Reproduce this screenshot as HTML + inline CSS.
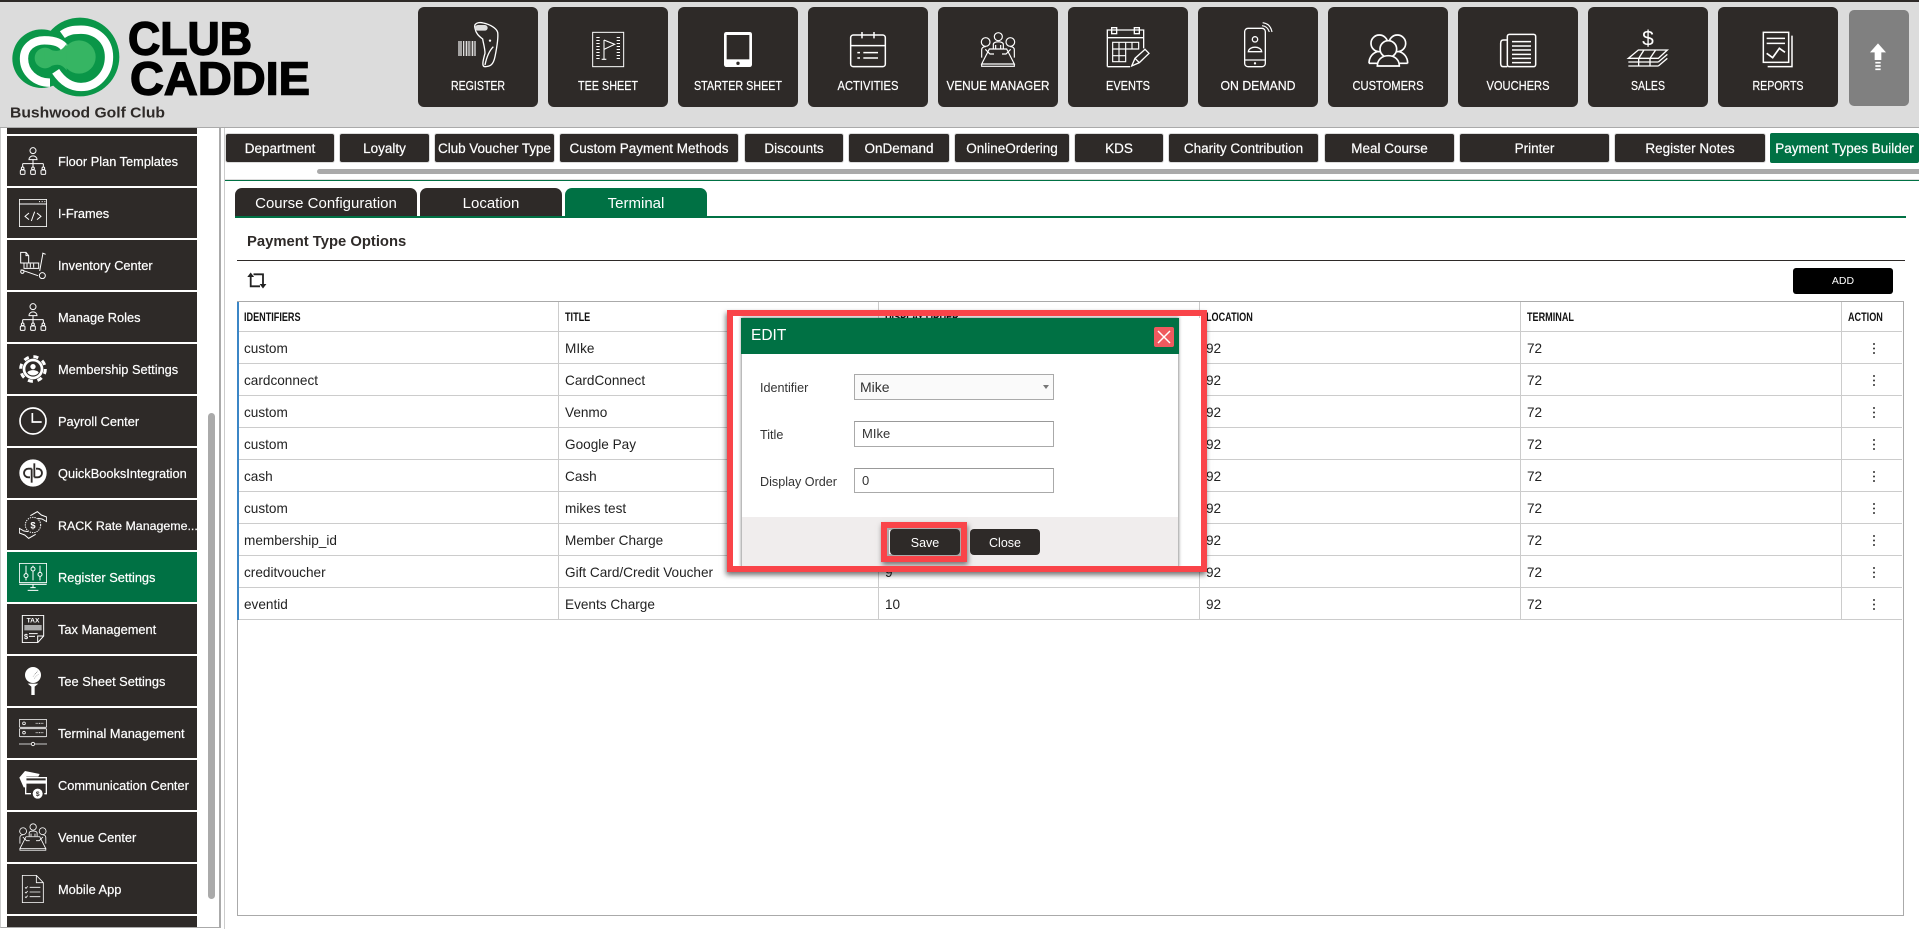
<!DOCTYPE html>
<html lang="en"><head><meta charset="utf-8"><title>Club Caddie - Payment Types Builder</title>
<style>
html,body{margin:0;padding:0;width:1919px;height:929px;overflow:hidden;background:#fff;font-family:"Liberation Sans",Arial,sans-serif;color:#222}
*{box-sizing:border-box}
.a{position:absolute}
#hd{left:0;top:0;width:1919px;height:128px;background:#dcdcdc;border-top:2px solid #2e2a28;border-bottom:1px solid #aaa}
.nb{position:absolute;top:7px;width:120px;height:100px;background:#2e2a28;border-radius:6px}
.si{position:absolute;left:7px;width:190px;height:50px;background:#2e2a28;color:#fff;font-size:12.8px;line-height:52px;padding-left:51px;white-space:nowrap;overflow:hidden;-webkit-text-stroke:.2px #fff}
.si svg{position:absolute;left:12px;top:11px;width:28px;height:28px;overflow:visible}
.si.on{background:#007144}
.tb{position:absolute;top:134px;height:28px;background:#2e2a28;color:#fff;font-size:13.5px;line-height:30px;text-align:center;border-radius:2px;box-shadow:0 0 0 1px #dcdcdc;white-space:nowrap;-webkit-text-stroke:.2px #fff}
.it{position:absolute;top:188px;height:28px;background:#2e2a28;color:#fff;font-size:15px;line-height:31px;text-align:center;border-radius:7px 7px 0 0}
#tw{left:237px;top:301px;width:1667px;height:615px;border:1px solid #aaa}
table{border-collapse:separate;border-spacing:0;table-layout:fixed;width:1664px;font-size:13.6px;color:#222}
td,th{height:32px;padding:2px 0 0 6px;border-bottom:1px solid #ccc;border-right:1px solid #ccc;text-align:left;font-weight:400;white-space:nowrap;overflow:hidden}
th{height:30px;font-size:11.5px;font-weight:700;color:#111}
th span{display:inline-block;transform:scaleX(.79);transform-origin:left center}
td:last-child,th:last-child{border-right:0}
i.d{display:block;width:2px;height:2px;margin:-6px 0 0 25px;background:#333;border-radius:50%;box-shadow:0 4.5px #333,0 9px #333}
.lb{position:absolute;left:760px;font-size:12.6px;color:#333;line-height:16px}
.fld{position:absolute;left:854px;width:200px;border:1px solid #aaa;border-top-color:#999;background:#fff;font-size:13px;color:#333;padding-left:7px}
.bt{position:absolute;top:529px;width:70px;height:26px;background:#2e2a28;color:#fff;font-size:12.5px;line-height:29px;text-align:center;border-radius:4px}
</style></head><body>

<svg width="0" height="0" style="position:absolute">
<defs>
<symbol id="org" viewBox="0 0 84 84"><g fill="none" stroke="#fff" stroke-width="3"><circle cx="42" cy="11" r="9"/><path d="M30 38c0-15 24-15 24 0z"/><path d="M42 38v12M11 50h62M11 50v10M42 50v10M73 50v10"/><circle cx="11" cy="64" r="4"/><rect x="4" y="69" width="14" height="13" rx="3"/><circle cx="42" cy="64" r="4"/><rect x="35" y="69" width="14" height="13" rx="3"/><circle cx="73" cy="64" r="4"/><rect x="66" y="69" width="14" height="13" rx="3"/></g></symbol>
<symbol id="ifr" viewBox="0 0 84 84"><g fill="none" stroke="#fff" stroke-width="3"><rect x="1" y="1" width="82" height="82"/><path d="M1 15h82M60 8h3M68 8h3M76 8h3"/><path d="M30 42L18 52l12 10M54 42l12 10-12 10M47 38l-10 28"/></g></symbol>
<symbol id="inv" viewBox="0 0 84 84"><g fill="none" stroke="#fff" stroke-width="3"><path d="M5 4h16l8 10v22H5zM21 4v10h8"/><path d="M15 36h44v16H15zM24 38v12M34 38v12M44 38v12"/><path d="M70 6l10 4M72 6l-10 54M5 56l52 18"/><circle cx="70" cy="74" r="9"/><circle cx="10" cy="62" r="5"/></g></symbol>
<symbol id="mem" viewBox="0 0 84 84"><circle cx="42" cy="42" r="37" fill="none" stroke="#fff" stroke-width="9" stroke-dasharray="15 14.07"/><circle cx="42" cy="42" r="31" fill="#fff"/><circle cx="42" cy="42" r="23" fill="#2e2a28"/><circle cx="42" cy="35" r="8" fill="#fff"/><path d="M25 52c6-9 28-9 34 0-6 12-28 12-34 0z" fill="#fff"/></symbol>
<symbol id="pay" viewBox="0 0 84 84"><g fill="none" stroke="#fff" stroke-width="5"><circle cx="42" cy="42" r="39"/><path d="M40 18v27h28"/></g></symbol>
<symbol id="qb" viewBox="0 0 84 84"><circle cx="42" cy="42" r="41" fill="#fff"/><g fill="none" stroke="#2e2a28" stroke-width="5.5"><path d="M38 29H28a13 13 0 0 0 0 26h5"/><path d="M38 29v42"/><path d="M46 55h10a13 13 0 0 0 0-26h-5"/><path d="M46 13v42"/></g></symbol>
<symbol id="rack" viewBox="0 0 84 84"><circle cx="42" cy="42" r="23" fill="none" stroke="#fff" stroke-width="3" stroke-dasharray="4 3"/><text x="42" y="52" text-anchor="middle" font-family="Liberation Sans" font-weight="700" font-size="28" fill="#fff">$</text><g fill="none" stroke="#fff" stroke-width="3"><path d="M34 14L55 2l12 10 16 6v14l-14-8-12-2"/><path d="M50 70L29 82 17 72 1 66V52l14 8 12 2"/></g></symbol>
<symbol id="reg" viewBox="0 0 84 84"><g fill="none" stroke="#fff" stroke-width="3"><rect x="1" y="1" width="82" height="58"/><path d="M21 8v24M21 44v8M42 8v4M42 24v28M63 8v20M63 40v12"/><circle cx="21" cy="38" r="6"/><circle cx="42" cy="18" r="6"/><circle cx="63" cy="34" r="6"/><path d="M1 64h82M42 64v10M26 82h32M34 74h16"/></g></symbol>
<symbol id="tax" viewBox="0 0 84 84"><g fill="none" stroke="#fff" stroke-width="3"><path d="M10 1h64v62L56 83H10zM56 83V63h18"/></g><text x="42" y="22" text-anchor="middle" font-family="Liberation Sans" font-weight="700" font-size="20" fill="#fff">TAX</text><path d="M16 30h52v16H16z" fill="#aaa"/><text x="15" y="72" font-family="Liberation Sans" font-weight="700" font-size="22" fill="#fff">$</text><path d="M30 56h26M30 64h18" stroke="#fff" stroke-width="3"/></symbol>
<symbol id="tee" viewBox="0 0 84 84"><circle cx="42" cy="24" r="24" fill="#fff"/><path d="M26 50h32l-11 9v25h-10V59z" fill="#fff"/><path d="M48 20l10-10M42 28l14-14M46 34l12-12" stroke="#888" stroke-width="2" stroke-dasharray="2 3"/></symbol>
<symbol id="term" viewBox="0 0 84 84"><g fill="none" stroke="#fff" stroke-width="2.5"><rect x="1" y="1" width="82" height="24" rx="3"/><rect x="1" y="29" width="82" height="24" rx="3"/><circle cx="15" cy="13" r="4"/><circle cx="15" cy="41" r="4"/><path d="M50 13h24M50 41h24" stroke-dasharray="3 2"/><path d="M0 75h36M48 75h36"/><circle cx="42" cy="75" r="5"/></g></symbol>
<symbol id="com" viewBox="0 0 84 84"><path d="M1 20L18 0l44 9-4 8H22v32h-8z" fill="#fff"/><g fill="none" stroke="#fff" stroke-width="4"><path d="M36 68H20V20h62v48h-6"/></g><path d="M20 28h62v10H20z" fill="#fff"/><circle cx="56" cy="68" r="15" fill="#fff"/><text x="56" y="75" text-anchor="middle" font-family="Liberation Sans" font-weight="700" font-size="20" fill="#2e2a28">$</text></symbol>
<symbol id="ven" viewBox="93 50 103 106"><g fill="none" stroke="#fff" stroke-width="3.2"><circle cx="107" cy="81" r="13"/><circle cx="145" cy="65" r="12"/><circle cx="181" cy="81" r="13"/><path d="M130 100v-12c0-10 30-10 30 0v12M137 90v10M152 90v10"/><path d="M95 128V105c0-7 5-10 12-10M193 128V105c0-7-5-10-12-10"/><path d="M106 103l14 14h12M182 103l-14 14h-12"/><path d="M118 102h52l23 45H95zM95 147v6h98v-6"/></g></symbol>
<symbol id="mob" viewBox="0 0 84 84"><g fill="none" stroke="#fff" stroke-width="2.5"><path d="M10 1h42l21 22v60H10zM52 1v22h21"/><path d="M18 37l3 3 5-6M18 51l3 3 5-6M18 65l3 3 5-6M32 37h32M32 51h32M32 65h32"/></g></symbol>
</defs></svg>

<div id="hd" class="a"></div>
<!-- nav buttons -->
<div class="nb" style="left:418px"></div><div class="nb" style="left:548px"></div><div class="nb" style="left:678px"></div><div class="nb" style="left:808px"></div><div class="nb" style="left:938px"></div><div class="nb" style="left:1068px"></div><div class="nb" style="left:1198px"></div><div class="nb" style="left:1328px"></div><div class="nb" style="left:1458px"></div><div class="nb" style="left:1588px"></div><div class="nb" style="left:1718px"></div>
<div class="a" style="left:1849px;top:10px;width:60px;height:96px;background:#808080;border-radius:5px"></div>

<svg class="a" style="left:0;top:0" width="1919" height="128" viewBox="0 0 1919 128">
<!-- logo -->
<g transform="translate(5,12) scale(.33333)">
<circle cx="110" cy="140" r="88" fill="#0a9648"/><circle cx="225" cy="135" r="118" fill="#0a9648"/>
<g fill="none" stroke="#fff" stroke-width="25"><path d="M135 212C90 212 57 180 57 140 57 105 85 85 118 85 145 85 170 92 180 110"/><path d="M152 178C170 205 195 225 228 225 275 225 312 185 312 135 312 85 275 53 228 53 205 53 190 55 172 68"/></g>
<circle cx="120" cy="138" r="31" fill="#36b563"/><circle cx="222" cy="135" r="50" fill="#36b563"/><path d="M120 108C150 118 165 125 185 95V175C165 150 150 158 120 168Z" fill="#36b563"/>
</g>
<text x="128" y="54.7" font-family="Liberation Sans" font-weight="700" font-size="46" fill="#000" stroke="#000" stroke-width="1.4" textLength="124" lengthAdjust="spacingAndGlyphs">CLUB</text>
<text x="130" y="94.3" font-family="Liberation Sans" font-weight="700" font-size="46" fill="#000" stroke="#000" stroke-width="1.4" textLength="180" lengthAdjust="spacingAndGlyphs">CADDIE</text>
<text x="10" y="117.5" font-family="Liberation Sans" font-weight="700" font-size="15" fill="#2e2a28" textLength="155" lengthAdjust="spacingAndGlyphs">Bushwood Golf Club</text>

<!-- zoom10 icons -->
<g transform="translate(440,15) scale(.33333)" fill="none" stroke="#fff" stroke-width="4">
<path d="M105 40C100 25 115 20 130 24 150 28 170 40 173 52 176 70 170 100 165 125 160 150 150 155 135 155 125 155 128 140 135 115 135 100 130 85 128 72 115 62 108 55 105 40Z"/>
<rect x="105" y="30" width="38" height="17" rx="8.5" fill="#ddd" stroke="none"/>
<circle cx="150" cy="77" r="3.5" fill="#fff" stroke="none"/><path d="M160 95C150 105 140 125 135 150"/>
<path d="M54 100.5H108" stroke-width="45" stroke-dasharray="2 2 4 2 2 3 3 2 1 2 5 2 2 2 3 2 1 2 4 2" opacity=".85"/>
<rect x="458" y="52" width="93" height="103" stroke-width="3"/>
<path d="M474 66V137M535 66V137" stroke-width="10" stroke-dasharray="3 6"/>
<path d="M492 75V133M485 133H499M492 75L524 88 492 103" stroke-width="3.2"/>
<rect x="852" y="51" width="84" height="105" rx="7" fill="#fff" stroke="none"/><rect x="860" y="60" width="68" height="73" fill="#2e2a28" stroke="none"/><circle cx="894" cy="145" r="5" fill="#2e2a28" stroke="none"/>
<rect x="1232" y="60" width="104" height="95" rx="8" stroke-width="4.5"/><path d="M1232 92H1336M1266 51V70M1302 51V70M1270 113H1314M1270 129H1314" stroke-width="4.5"/><path d="M1252 113h8M1252 129h8" stroke-width="4.5"/>
</g>
<!-- zoom11 icons -->
<g transform="translate(950,15) scale(.33333)" fill="none" stroke="#fff" stroke-width="3.5">
<circle cx="107" cy="81" r="13"/><circle cx="145" cy="65" r="12"/><circle cx="181" cy="81" r="13"/>
<path d="M130 100V88C130 78 160 78 160 88V100M137 90V100M152 90V100M95 128V105C95 98 100 95 107 95M193 128V105C193 98 188 95 181 95M106 103L120 117H132M182 103L168 117H156M118 102H170L193 147H95ZM95 147V154H193V147"/>
<path d="M472 155V45H581V100M472 155H540M472 68H581" stroke-width="4"/>
<rect x="485" y="38" width="15" height="18" stroke-width="4"/><rect x="553" y="38" width="15" height="18" stroke-width="4"/>
<path d="M488 82H566V102H488ZM488 122H527V82M488 102V140H527V102M507 82V140M546 82V102" stroke-width="3.5"/>
<path d="M545 153L555 130 585 103 597 115 568 143ZM555 130L568 143" stroke-width="4"/>
<rect x="884" y="40" width="62" height="115" rx="10" stroke-width="4"/><path d="M884 135H946" stroke-width="4"/><circle cx="915" cy="145" r="3.5" fill="#fff" stroke="none"/>
<circle cx="915" cy="73" r="8" stroke-width="4"/><path d="M895 110C897 92 933 92 935 110Z" stroke-width="4"/>
<path d="M936 32C948 33 955 41 958 51M938 23C955 25 963 35 966 51" stroke-width="3.5"/>
<g stroke-width="5"><circle cx="1288" cy="85" r="25"/><circle cx="1342" cy="85" r="25"/><path d="M1257 145C1257 125 1270 113 1282 110M1373 145C1373 125 1360 113 1348 110M1257 145H1282M1373 145H1348"/>
<circle cx="1315" cy="102" r="25" fill="#2e2a28"/><path d="M1282 153C1282 135 1295 122 1315 122 1335 122 1348 135 1348 153Z" fill="#2e2a28"/></g>
</g>
<!-- zoom12 icons -->
<g transform="translate(1450,15) scale(.33333)" fill="none" stroke="#fff" stroke-width="4.5">
<rect x="172" y="58" width="85" height="97" rx="6"/><path d="M172 75H160Q152 75 152 85V145Q152 155 160 155H172"/>
<path d="M186 80H243M186 93H243M186 105H243M186 118H243M186 130H243M186 143H243"/>
<path d="M535 130L565 105H652L625 130ZM535 130H625M535 141H625M535 153H625M625 130L652 105M625 141L652 118M625 153L652 130M566 130V153M600 130V153M582 105L566 130M617 105L600 130" stroke-width="4"/>
<rect x="940" y="52" width="76" height="90"/><path d="M1026 62V155H953"/><path d="M950 70H1005M950 85H1005"/><path d="M950 115L968 128 988 100 1005 112" stroke-width="5"/>
<path d="M1284 85L1308 112H1294V135H1274V112H1260Z" fill="#fff" stroke="none"/><path d="M1276 143H1292M1276 153H1292M1276 163H1292" stroke-width="5"/>
</g>
<text x="1648" y="45.5" text-anchor="middle" font-family="Liberation Sans" font-size="21" fill="#fff">$</text>
<!-- labels -->
<g font-family="Liberation Sans" font-size="12.5" fill="#fff" stroke="#fff" stroke-width=".2" text-anchor="middle">
<text x="478" y="90" textLength="54" lengthAdjust="spacingAndGlyphs">REGISTER</text>
<text x="608" y="90" textLength="60" lengthAdjust="spacingAndGlyphs">TEE SHEET</text>
<text x="738" y="90" textLength="88" lengthAdjust="spacingAndGlyphs">STARTER SHEET</text>
<text x="868" y="90" textLength="61" lengthAdjust="spacingAndGlyphs">ACTIVITIES</text>
<text x="998" y="90" textLength="103" lengthAdjust="spacingAndGlyphs">VENUE MANAGER</text>
<text x="1128" y="90" textLength="44" lengthAdjust="spacingAndGlyphs">EVENTS</text>
<text x="1258" y="90" textLength="75" lengthAdjust="spacingAndGlyphs">ON DEMAND</text>
<text x="1388" y="90" textLength="71" lengthAdjust="spacingAndGlyphs">CUSTOMERS</text>
<text x="1518" y="90" textLength="63" lengthAdjust="spacingAndGlyphs">VOUCHERS</text>
<text x="1648" y="90" textLength="34" lengthAdjust="spacingAndGlyphs">SALES</text>
<text x="1778" y="90" textLength="51" lengthAdjust="spacingAndGlyphs">REPORTS</text>
</g>
</svg>

<!-- sidebar -->
<div class="a" style="left:0;top:128px;width:221px;height:800px;border-left:1px solid #ccc;border-right:2px solid #aaa;border-bottom:1px solid #aaa;overflow:hidden">
</div>
<div class="a" style="left:224px;top:128px;width:1px;height:801px;background:#ccc"></div>
<div class="si" style="top:128px;height:6px"></div>
<div class="si" style="top:136px"><svg><use href="#org"/></svg>Floor Plan Templates</div>
<div class="si" style="top:188px"><svg><use href="#ifr"/></svg>I-Frames</div>
<div class="si" style="top:240px"><svg><use href="#inv"/></svg>Inventory Center</div>
<div class="si" style="top:292px"><svg><use href="#org"/></svg>Manage Roles</div>
<div class="si" style="top:344px"><svg><use href="#mem"/></svg>Membership Settings</div>
<div class="si" style="top:396px"><svg><use href="#pay"/></svg>Payroll Center</div>
<div class="si" style="top:448px"><svg><use href="#qb"/></svg>QuickBooksIntegration</div>
<div class="si" style="top:500px;font-size:12.4px"><svg><use href="#rack"/></svg>RACK Rate Manageme...</div>
<div class="si on" style="top:552px"><svg><use href="#reg"/></svg>Register Settings</div>
<div class="si" style="top:604px"><svg><use href="#tax"/></svg>Tax Management</div>
<div class="si" style="top:656px"><svg><use href="#tee"/></svg>Tee Sheet Settings</div>
<div class="si" style="top:708px"><svg><use href="#term"/></svg>Terminal Management</div>
<div class="si" style="top:760px"><svg><use href="#com"/></svg>Communication Center</div>
<div class="si" style="top:812px"><svg><use href="#ven"/></svg>Venue Center</div>
<div class="si" style="top:864px"><svg><use href="#mob"/></svg>Mobile App</div>
<div class="si" style="top:916px;height:11px"></div>
<div class="a" style="left:208px;top:413px;width:7px;height:486px;background:#aaa;border-radius:4px"></div>

<!-- settings tabs -->
<div class="tb" style="left:226px;width:108px">Department</div>
<div class="tb" style="left:340px;width:89px">Loyalty</div>
<div class="tb" style="left:435px;width:119px;letter-spacing:-.05px">Club Voucher Type</div>
<div class="tb" style="left:560px;width:178px">Custom Payment Methods</div>
<div class="tb" style="left:745px;width:98px">Discounts</div>
<div class="tb" style="left:849px;width:100px">OnDemand</div>
<div class="tb" style="left:955px;width:114px">OnlineOrdering</div>
<div class="tb" style="left:1075px;width:88px">KDS</div>
<div class="tb" style="left:1169px;width:149px">Charity Contribution</div>
<div class="tb" style="left:1325px;width:129px">Meal Course</div>
<div class="tb" style="left:1460px;width:149px">Printer</div>
<div class="tb" style="left:1615px;width:150px">Register Notes</div>
<div class="tb" style="left:1770px;width:149px;top:133px;height:30px;line-height:32px;background:#007144;box-shadow:none">Payment Types Builder</div>
<div class="a" style="left:317px;top:169px;width:1602px;height:5px;background:#aaa;border-radius:3px 0 0 3px"></div>
<div class="a" style="left:225px;top:179px;width:1694px;height:2px;background:#dcdcdc"></div>
<div class="a" style="left:225px;top:180px;width:1694px;height:1px;background:#007144"></div>

<!-- inner tabs -->
<div class="it" style="left:235px;width:182px">Course Configuration</div>
<div class="it" style="left:420px;width:142px">Location</div>
<div class="it" style="left:565px;width:142px;background:#007144">Terminal</div>
<div class="a" style="left:235px;top:216px;width:1671px;height:2px;background:#007144"></div>

<div class="a" style="left:247px;top:233px;font-size:14.8px;font-weight:700;line-height:18px;color:#2e2a28">Payment Type Options</div>
<div class="a" style="left:237px;top:260px;width:1668px;height:1px;background:#2e2a28"></div>
<svg class="a" style="left:246px;top:271px" width="22" height="20" viewBox="246 272 22 20"><g fill="none" stroke="#222" stroke-width="1.8"><path d="M250.7 277V287.3H260"/><path d="M263 286V275.3H253.5"/></g><path d="M250.7 273.5l3.4 4.5h-6.8zM263 289.5l3.4-4.5h-6.8z" fill="#222"/></svg>
<div class="a" style="left:1793px;top:268px;width:100px;height:26px;background:#000;color:#fff;border-radius:3px;font-size:10.5px;line-height:26px;text-align:center">ADD</div>

<!-- table -->
<div id="tw" class="a">
<table>
<colgroup><col style="width:321px"><col style="width:320px"><col style="width:321px"><col style="width:321px"><col style="width:321px"><col style="width:60px"></colgroup>
<tr><th><span>IDENTIFIERS</span></th><th><span>TITLE</span></th><th><span>DISPLAY ORDER</span></th><th><span>LOCATION</span></th><th><span>TERMINAL</span></th><th><span>ACTION</span></th></tr>
<tr><td>custom</td><td>MIke</td><td>1</td><td>92</td><td>72</td><td><i class="d"></i></td></tr>
<tr><td>cardconnect</td><td>CardConnect</td><td>2</td><td>92</td><td>72</td><td><i class="d"></i></td></tr>
<tr><td>custom</td><td>Venmo</td><td>3</td><td>92</td><td>72</td><td><i class="d"></i></td></tr>
<tr><td>custom</td><td>Google Pay</td><td>4</td><td>92</td><td>72</td><td><i class="d"></i></td></tr>
<tr><td>cash</td><td>Cash</td><td>5</td><td>92</td><td>72</td><td><i class="d"></i></td></tr>
<tr><td>custom</td><td>mikes test</td><td>6</td><td>92</td><td>72</td><td><i class="d"></i></td></tr>
<tr><td>membership_id</td><td>Member Charge</td><td>8</td><td>92</td><td>72</td><td><i class="d"></i></td></tr>
<tr><td>creditvoucher</td><td>Gift Card/Credit Voucher</td><td>9</td><td>92</td><td>72</td><td><i class="d"></i></td></tr>
<tr><td>eventid</td><td>Events Charge</td><td>10</td><td>92</td><td>72</td><td><i class="d"></i></td></tr>
</table>
</div>
<div class="a" style="left:237px;top:302px;width:2px;height:318px;background:#3b86c6"></div>

<!-- modal -->
<div class="a" style="left:733px;top:318px;width:8px;height:248px;background:#fff"></div>
<div class="a" style="left:1179px;top:318px;width:22px;height:248px;background:#fff"></div>
<div class="a" style="left:741px;top:318px;width:438px;height:250px;background:#fff;border-left:1px solid #bbb;border-right:1px solid #bbb;box-shadow:0 -1px 3px rgba(0,0,0,.4)"></div>
<div class="a" style="left:741px;top:318px;width:438px;height:36px;background:#007144"></div>
<div class="a" style="left:751px;top:327px;color:#fff;font-size:15.5px;line-height:18px">EDIT</div>
<div class="a" style="left:1154px;top:327px;width:20px;height:20px;background:#ef5a5f;border-radius:2px"></div>
<svg class="a" style="left:1154px;top:327px" width="20" height="20"><path d="M4 4L16 16M16 4L4 16" stroke="#fff" stroke-width="1.5"/></svg>
<div class="lb" style="top:380px">Identifier</div>
<div class="lb" style="top:427px">Title</div>
<div class="lb" style="top:474px">Display Order</div>
<div class="fld" style="top:374px;height:26px;line-height:24px;background:#fafafa;border-color:#aaa;font-size:14px;padding-left:5px">Mike</div>
<svg class="a" style="left:1042px;top:384px" width="8" height="6"><path d="M1 1h6L4 5z" fill="#777"/></svg>
<div class="fld" style="top:421px;height:26px;line-height:24px">MIke</div>
<div class="fld" style="top:468px;height:25px;line-height:24px">0</div>
<div class="a" style="left:742px;top:517px;width:436px;height:51px;background:#f0eded"></div>
<div class="a" style="left:881px;top:522px;width:86px;height:40px;border:6px solid #f94449;box-shadow:1px 3px 5px rgba(0,0,0,.5),inset 0 0 0 2px #aaa"></div>
<div class="bt" style="left:890px">Save</div>
<div class="bt" style="left:970px">Close</div>
<div class="a" style="left:727px;top:310px;width:480px;height:262px;border:6px solid #f94449;box-shadow:-1px 3px 5px rgba(0,0,0,.55)"></div>

</body></html>
